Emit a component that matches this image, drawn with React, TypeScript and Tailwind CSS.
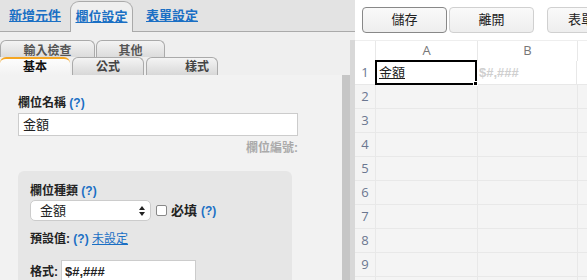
import React from "react";

const rows = [1, 2, 3, 4, 5, 6, 7, 8, 9, 10];

function Q() {
  return <span className="text-[#1a6fc4] font-bold">(?)</span>;
}

export default function App() {
  return (
    <div className="w-[587px] h-[280px] overflow-hidden flex font-['Liberation_Sans','Noto_Sans_CJK_TC',sans-serif] text-[12px] text-[#222]">
      {/* Left panel */}
      <div className="w-[355px] h-full flex flex-col bg-[#efefef]">
        {/* top tabs */}
        <div className="h-[32px] shrink-0 bg-[#e3e3e3] border-b border-[#aaa] flex items-stretch">
          <a className="w-[70px] flex items-center justify-center pt-[1px] text-[13px] font-bold text-[#1a6fc4] underline">新增元件</a>
          <div className="w-[63px] mt-[1px] -mb-px rounded-t-[9px] border border-b-0 border-[#aaa] bg-[#efefef] flex items-center justify-center text-[13px] font-bold text-[#1a6fc4] underline">
            欄位設定
          </div>
          <a className="w-[78px] flex items-center justify-center pt-[1px] text-[13px] font-bold text-[#1a6fc4] underline">表單設定</a>
        </div>
        {/* sub tabs */}
        <div className="pt-[8px] shrink-0">
          <div className="flex h-[17px] gap-[1px]">
            <div className="w-[95px] rounded-t-[6px] border border-b-0 border-[#aaa] bg-gradient-to-b from-[#f4f4f4] to-[#dcdcdc] flex items-start justify-center pt-[1px] text-[12px] font-bold text-[#555]">輸入檢查</div>
            <div className="w-[69px] rounded-t-[6px] border border-b-0 border-[#aaa] bg-gradient-to-b from-[#f4f4f4] to-[#dcdcdc] flex items-start justify-center pt-[1px] text-[12px] font-bold text-[#555]">其他</div>
          </div>
          <div className="flex h-[18px] gap-[2px]">
            <div className="w-[70px] rounded-t-[6px] border-t-2 border-[#f5a623] bg-gradient-to-b from-[#fdfdfd] to-[#f2f2f2] flex items-center justify-center text-[12px] font-bold text-[#111]">基本</div>
            <div className="w-[72px] rounded-t-[6px] border border-b-0 border-[#aaa] bg-gradient-to-b from-[#f4f4f4] to-[#d8d8d8] flex items-center justify-center text-[12px] font-bold text-[#444]">公式</div>
            <div className="w-[72px] rounded-t-[6px] border border-b-0 border-[#aaa] bg-gradient-to-b from-[#f4f4f4] to-[#d8d8d8] flex items-center justify-end pr-[8px] text-[12px] font-bold text-[#444]">樣式</div>
          </div>
        </div>
        {/* content */}
        <div className="flex-1 flex min-h-0">
          <div className="flex-1 bg-[#f2f2f2] pl-[18px] pr-[44px] pt-[21px]">
            <div className="text-[12px] font-bold leading-[14px]">
              欄位名稱 <Q />
            </div>
            <div className="mt-[3px] h-[23px] w-[280px] border border-[#ccc] bg-white flex items-center px-[4px] text-[13px]">金額</div>
            <div className="w-[280px] text-right text-[12px] font-bold text-[#aaa] mt-[5px] leading-[14px]">欄位編號:</div>
            <div className="mt-[16px] w-[274px] h-[200px] rounded-[6px] bg-[#e6e6e6] pl-[12px] pt-[13px]">
              <div className="text-[12px] font-bold leading-[14px]">
                欄位種類 <Q />
              </div>
              <div className="flex items-center mt-[2px]">
                <div className="w-[121px] h-[21px] rounded-[5px] border border-[#ccc] bg-white flex items-center justify-between pl-[9px] pr-[5px] text-[13px]">
                  <span>金額</span>
                  <svg width="6" height="10" viewBox="0 0 6 10">
                    <path d="M3 0 L6 4 L0 4 Z M0 6 L6 6 L3 10 Z" fill="#222" />
                  </svg>
                </div>
                <div className="ml-[5px] w-[11px] h-[11px] rounded-[2px] border border-[#888] bg-white" />
                <span className="ml-[4px] text-[13px] font-bold">必填</span>
                <span className="ml-[4px] text-[12px]"><Q /></span>
              </div>
              <div className="mt-[11px] text-[12px] font-bold leading-[14px]">
                預設值: <Q /> <span className="text-[#1a6fc4] font-normal underline">未設定</span>
              </div>
              <div className="mt-[14px] flex items-center">
                <span className="text-[12px] font-bold">格式:</span>
                <div className="ml-[3px] w-[135px] h-[23px] border border-[#ccc] bg-white flex items-center px-[3px] text-[13px] font-bold">$#,###</div>
              </div>
            </div>
          </div>
          <div className="w-[13px] bg-[#c6c6c6]" />
        </div>
      </div>

      {/* Right panel */}
      <div className="flex-1 h-full flex flex-col bg-white">
        <div className="h-[40px] shrink-0 flex items-start pt-[7px] pl-[7px] gap-[2px]">
          <div className="w-[85px] h-[26px] rounded-[4px] border border-[#888] bg-gradient-to-b from-[#fafafa] to-[#eeeeee] flex items-center justify-center text-[13px]">儲存</div>
          <div className="w-[85px] h-[26px] rounded-[4px] border border-[#d0d0d0] bg-gradient-to-b from-[#fafafa] to-[#eeeeee] flex items-center justify-center text-[13px]">離開</div>
          <div className="ml-[11px] w-[85px] h-[26px] rounded-[4px] border border-[#d0d0d0] bg-gradient-to-b from-[#fafafa] to-[#eeeeee] flex items-center pl-[20px] text-[13px] whitespace-nowrap">表單設定</div>
        </div>
        <div className="flex-1 flex flex-col border-l-[5px] border-[#d8d8d8] -ml-[5px]">
          {/* header */}
          <div className="h-[21px] shrink-0 flex bg-white border-t border-[#eee] text-[13px] text-[#777] font-['Open_Sans',sans-serif]">
            <div className="w-[21px] border-r border-[#e8e8e8]" />
            <div className="w-[102px] border-r border-[#e8e8e8] flex items-center justify-center">A</div>
            <div className="w-[100px] border-r border-[#e8e8e8] flex items-center justify-center">B</div>
            <div className="flex-1" />
          </div>
          {rows.map((r) => (
            <div
              key={r}
              className={
                "h-[24px] shrink-0 flex border-b border-[#e8e8e8] " +
                (r === 1 ? "bg-white" : "bg-[#f4f4f4]")
              }
            >
              <div className="w-[21px] border-r border-[#e8e8e8] flex items-center justify-center text-[13px] text-[#6b7790] font-['Open_Sans',sans-serif]">
                {r < 10 ? r : ""}
              </div>
              {r === 1 ? (
                <>
                  <div className="relative w-[102px] border-2 border-black -ml-[1px] -mt-[1px] h-[25px] flex items-center pl-[2px] text-[13px]">
                    <span className="underline">金額</span>
                    <div className="absolute -right-[3px] -bottom-[3px] w-[5px] h-[5px] bg-black border border-white" />
                  </div>
                  <div className="w-[100px] border-r border-[#e8e8e8] flex items-center pl-[2px] text-[13px] font-bold text-[#cfcfcf]">
                    $#,###
                  </div>
                </>
              ) : (
                <>
                  <div className="w-[102px] border-r border-[#e8e8e8]" />
                  <div className="w-[100px] border-r border-[#e8e8e8]" />
                </>
              )}
              <div className="flex-1" />
            </div>
          ))}
        </div>
      </div>
    </div>
  );
}
